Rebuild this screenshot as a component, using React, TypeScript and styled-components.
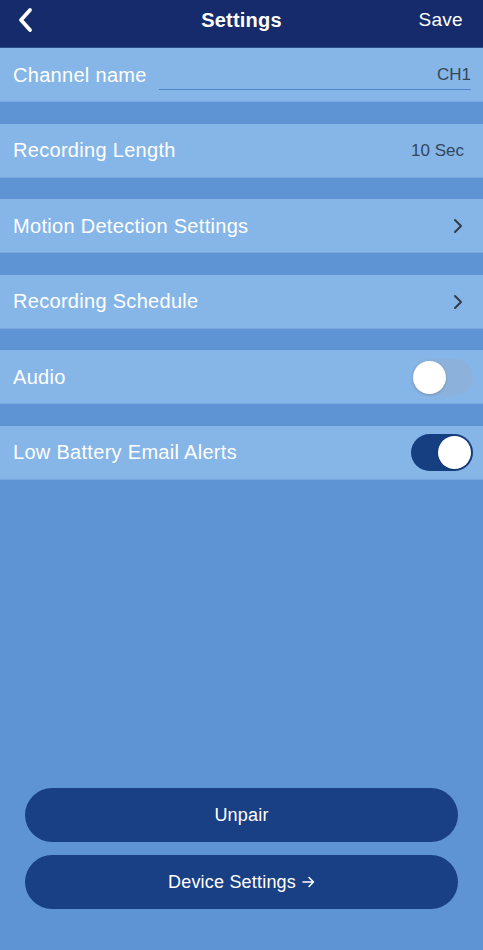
import styled, { createGlobalStyle } from "styled-components";

const GlobalStyle = createGlobalStyle`
  html, body {
    margin: 0;
    padding: 0;
    background: #5e94d3;
  }
  body {
    font-family: "Liberation Sans", Arial, sans-serif;
  }
`;

const Screen = styled.div`
  width: 483px;
  height: 950px;
  display: flex;
  flex-direction: column;
  background: #5e94d3;
  overflow: hidden;
`;

const NavBar = styled.header`
  height: 48px;
  box-sizing: border-box;
  padding-bottom: 7px;
  display: grid;
  grid-template-columns: 80px 1fr 80px;
  align-items: center;
  background: #152b6c;
  border-bottom: 1px solid #2a4a8c;
  color: #fff;
`;

const BackButton = styled.button`
  background: none;
  border: 0;
  padding: 0 0 0 17px;
  display: flex;
  align-items: center;
  height: 100%;
  cursor: pointer;
`;

const Title = styled.h1`
  margin: 0;
  text-align: center;
  font-size: 20px;
  font-weight: 700;
  letter-spacing: 0.2px;
`;

const SaveButton = styled.button`
  background: none;
  border: 0;
  color: #fff;
  font-family: inherit;
  font-size: 19px;
  letter-spacing: 0.3px;
  text-align: right;
  padding: 0 20px 0 0;
  cursor: pointer;
`;

const List = styled.div`
  display: flex;
  flex-direction: column;
  gap: 21.5px;
`;

const Row = styled.div`
  height: 54px;
  box-sizing: border-box;
  display: flex;
  align-items: center;
  justify-content: space-between;
  padding: 1px 10px 0 13px;
  background: #86b6e8;
  border-bottom: 1px solid #78a8df;
`;

const Label = styled.span`
  color: #fff;
  font-size: 20px;
  letter-spacing: 0.3px;
  white-space: nowrap;
`;

const Value = styled.span`
  color: #34465a;
  font-size: 17px;
  padding-right: 9px;
`;

const NameInput = styled.div`
  flex: 1;
  margin-left: 12px;
  margin-right: 2px;
  height: 28px;
  display: flex;
  align-items: center;
  justify-content: flex-end;
  border-bottom: 1.5px solid #4f86c8;
  color: #34465a;
  font-size: 17px;
`;

const Chevron = styled.svg`
  width: 10px;
  height: 16px;
  margin-right: 10px;
`;

const Track = styled.div<{ $on: boolean }>`
  width: 62px;
  height: 37px;
  border-radius: 19px;
  background: ${(p) => (p.$on ? "#163f82" : "#8cb2dc")};
  display: flex;
  align-items: center;
  justify-content: ${(p) => (p.$on ? "flex-end" : "flex-start")};
  padding: 0 2px;
  box-sizing: border-box;
`;

const Knob = styled.div`
  width: 33px;
  height: 33px;
  border-radius: 50%;
  background: #fff;
  box-shadow: 0 1px 3px rgba(0, 0, 0, 0.18);
`;

const Spacer = styled.div`
  flex: 1;
`;

const Actions = styled.div`
  display: flex;
  flex-direction: column;
  gap: 13px;
  padding: 0 25px 41px;
`;

const PillButton = styled.button`
  height: 54px;
  border: 0;
  border-radius: 27px;
  background: #193f85;
  color: #fff;
  font-family: inherit;
  font-size: 18px;
  letter-spacing: 0.2px;
  display: flex;
  align-items: center;
  justify-content: center;
  gap: 6px;
  cursor: pointer;
`;

function Toggle({ on }: { on: boolean }) {
  return (
    <Track $on={on}>
      <Knob />
    </Track>
  );
}

function RightChevron() {
  return (
    <Chevron viewBox="0 0 10 16">
      <path d="M2 2 L8 8 L2 14" fill="none" stroke="#333d4a" strokeWidth="2" strokeLinecap="round" strokeLinejoin="round" />
    </Chevron>
  );
}

export default function App() {
  return (
    <Screen>
      <GlobalStyle />
      <NavBar>
        <BackButton aria-label="Back">
          <svg width="16" height="26" viewBox="0 0 16 26">
            <path d="M13 3 L4 13 L13 23" fill="none" stroke="#fff" strokeWidth="3.8" strokeLinecap="round" strokeLinejoin="round" />
          </svg>
        </BackButton>
        <Title>Settings</Title>
        <SaveButton>Save</SaveButton>
      </NavBar>

      <List>
        <Row>
          <Label>Channel name</Label>
          <NameInput>CH1</NameInput>
        </Row>
        <Row>
          <Label>Recording Length</Label>
          <Value>10 Sec</Value>
        </Row>
        <Row>
          <Label>Motion Detection Settings</Label>
          <RightChevron />
        </Row>
        <Row>
          <Label>Recording Schedule</Label>
          <RightChevron />
        </Row>
        <Row>
          <Label>Audio</Label>
          <Toggle on={false} />
        </Row>
        <Row>
          <Label>Low Battery Email Alerts</Label>
          <Toggle on={true} />
        </Row>
      </List>

      <Spacer />

      <Actions>
        <PillButton>Unpair</PillButton>
        <PillButton>
          Device Settings
          <svg width="13" height="12" viewBox="0 0 13 12">
            <path d="M1 6 H11.5 M7 1.5 L11.5 6 L7 10.5" fill="none" stroke="#fff" strokeWidth="1.5" strokeLinecap="round" strokeLinejoin="round" />
          </svg>
        </PillButton>
      </Actions>
    </Screen>
  );
}
